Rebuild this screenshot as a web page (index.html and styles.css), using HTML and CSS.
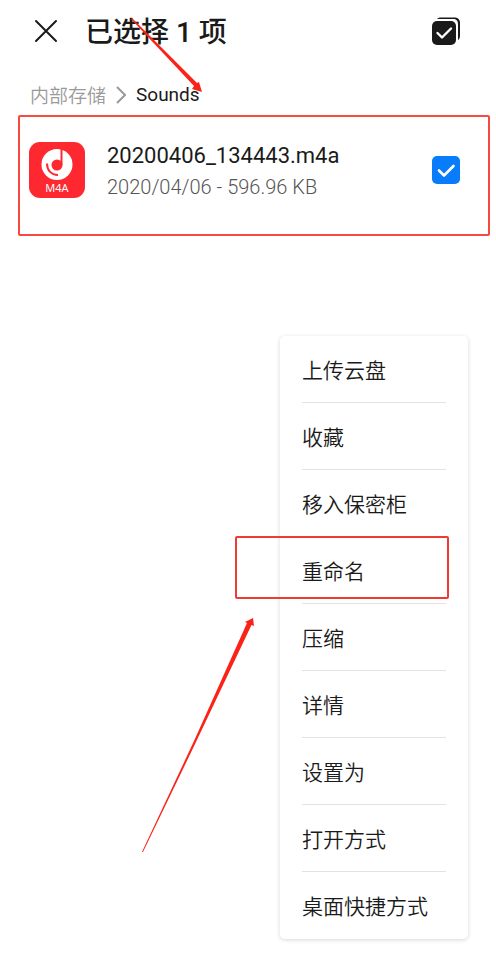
FILE: index.html
```html
<!DOCTYPE html>
<html lang="zh-CN">
<head>
    <meta charset="UTF-8">
    <meta name="viewport" content="width=device-width, initial-scale=1.0">
    <title>已选择 1 项</title>
    <link rel="stylesheet" href="styles.css">
</head>
<body>

<header class="topbar">
    <button class="icon-btn" type="button" aria-label="关闭">
        <svg width="28" height="28" viewBox="0 0 28 28" fill="none" stroke="#1a1a1a" stroke-width="2" stroke-linecap="round">
            <path d="M4 4L24 24M24 4L4 24"/>
        </svg>
    </button>
    <h1 class="title">已选择 1 项</h1>
    <button class="icon-btn" type="button" aria-label="全选">
        <svg width="28" height="28" viewBox="0 0 28 28" fill="none">
            <path d="M5 2C6 1 7 0.500 9 0.500H22C26 0.500 28 2.500 28 6V18C28 20.500 27.500 22 26 23V7C26 4 24.500 2 21 2Z" fill="#1a1a1a"/>
            <rect x="0" y="4" width="24" height="24" rx="5" fill="#1a1a1a"/>
            <path d="M5.500 16L10 20.500L19 11.500" stroke="#fff" stroke-width="2.400" stroke-linecap="round" stroke-linejoin="round"/>
        </svg>
    </button>
    <svg class="arrow arrow-path" width="72" height="75" viewBox="0 0 72 75">
        <path d="M0 1L1 0L66 65L68 64L71 74L61 71L63 68Z" fill="#fb2318"/>
    </svg>
</header>

<nav class="breadcrumb" aria-label="路径">
    <a class="crumb" href="#">内部存储</a>
    <svg width="10" height="18" viewBox="0 0 10 18" fill="none" stroke="#9a9a9a" stroke-width="2">
        <path d="M1 1L9 9L1 17"/>
    </svg>
    <a class="crumb current" href="#">Sounds</a>
</nav>

<main>
    <section class="file">
        <svg class="file-icon" width="56" height="56" viewBox="0 0 56 56">
            <rect width="56" height="56" rx="11" fill="#fd2830"/>
            <circle cx="28" cy="22.500" r="15.500" fill="#fff"/>
            <circle cx="28" cy="23" r="5.500" fill="#fd2830"/>
            <path d="M31.500 6V23H33.500V6Z" fill="#fd2830"/>
            <path d="M18 21.500C18 28 22 33 29 33" fill="none" stroke="#fd2830" stroke-width="2"/>
            <text class="file-type" x="28" y="50" text-anchor="middle">M4A</text>
        </svg>
        <div class="file-text">
            <label class="file-name" for="file1">20200406_134443.m4a</label>
            <span class="file-meta">2020/04/06 - 596.96 KB</span>
        </div>
        <span class="check">
            <input type="checkbox" id="file1" checked>
            <svg width="28" height="28" viewBox="0 0 28 28" fill="none" stroke="#fff" stroke-width="2.600" stroke-linecap="round" stroke-linejoin="round">
                <path d="M7 14.500L12 19.500L21.500 10"/>
            </svg>
        </span>
    </section>

    <div class="menu">
        <ul class="menu-list">
            <li><button type="button">上传云盘</button></li>
            <li><button type="button">收藏</button></li>
            <li><button type="button">移入保密柜</button></li>
            <li class="marked"><button type="button">重命名</button></li>
            <li><button type="button">压缩</button></li>
            <li><button type="button">详情</button></li>
            <li><button type="button">设置为</button></li>
            <li><button type="button">打开方式</button></li>
            <li><button type="button">桌面快捷方式</button></li>
        </ul>
        <svg class="arrow arrow-menu" width="112" height="235" viewBox="0 0 112 235">
            <path d="M0 234L52 123L105 5L103 4L111 0L112 8L109.500 7L54 124L1 234Z" fill="#fb2318"/>
        </svg>
    </div>
</main>

</body>
</html>
```
FILE: styles.css
```css
* {
    box-sizing: border-box;
}

body {
    margin: 0;
    background: #fff;
    color: #1a1a1a;
    font-family: Roboto, "Noto Sans CJK SC", sans-serif;
}

button {
    border: 0;
    padding: 0;
    background: none;
    color: inherit;
    font: inherit;
    cursor: pointer;
}

.topbar {
    position: relative;
    display: flex;
    align-items: center;
    height: 62px;
    padding: 0 36px 0 32px;
}

.icon-btn {
    display: flex;
}

.title {
    flex: 1;
    margin: 0 0 0 25px;
    padding-top: 4px;
    font-size: 28px;
    font-weight: 500;
    line-height: 40px;
}

.arrow {
    position: absolute;
    pointer-events: none;
}

.arrow-path {
    left: 131px;
    top: 18px;
}

.breadcrumb {
    display: flex;
    align-items: center;
    gap: 10px;
    height: 53px;
    padding: 12px 30px 0;
    font-size: 19px;
    font-weight: 350;
}

.crumb {
    color: #9a9a9a;
    text-decoration: none;
}

.current {
    color: #1a1a1a;
    font-weight: 400;
}

.file {
    display: flex;
    align-items: center;
    height: 121px;
    margin: 0 6px 0 18px;
    padding: 0 28px 12px 9px;
    border: 2px solid #f9483f;
    border-radius: 2px;
}

.file-type {
    fill: #fff;
    font-family: "Noto Sans", sans-serif;
    font-size: 11px;
}

.file-text {
    display: flex;
    flex: 1;
    flex-direction: column;
    margin-left: 22px;
    padding-top: 2px;
}

.file-name {
    font-size: 22px;
    line-height: 32px;
}

.file-meta {
    color: #555;
    font-size: 20px;
    font-weight: 350;
    line-height: 30px;
}

.check {
    display: grid;
}

.check input,
.check svg {
    grid-area: 1 / 1;
}

.check input {
    appearance: none;
    width: 28px;
    height: 28px;
    margin: 0;
    border-radius: 5px;
    background: #b8b8b8;
}

.check input:checked {
    background: #087cfa;
}

.check svg {
    pointer-events: none;
}

.menu {
    position: relative;
    width: 188px;
    margin: 100px 28px 19px auto;
    border-radius: 5px;
    box-shadow: 0 1px 4px rgba(0, 0, 0, 0.16);
}

.menu-list {
    margin: 0;
    padding: 0 22px;
    list-style: none;
}

.menu-list li {
    position: relative;
    border-bottom: 1px solid #e2e2e2;
}

.menu-list li:last-child {
    border-bottom-color: transparent;
}

.menu-list button {
    width: 100%;
    height: 66px;
    font-size: 21px;
    font-weight: 350;
    text-align: left;
}

.marked::after {
    content: "";
    position: absolute;
    top: -1px;
    right: -3px;
    bottom: 4px;
    left: -67px;
    border: 2px solid #f03a32;
    border-radius: 2px;
    pointer-events: none;
}

.arrow-menu {
    top: 282px;
    right: 214px;
}
```
